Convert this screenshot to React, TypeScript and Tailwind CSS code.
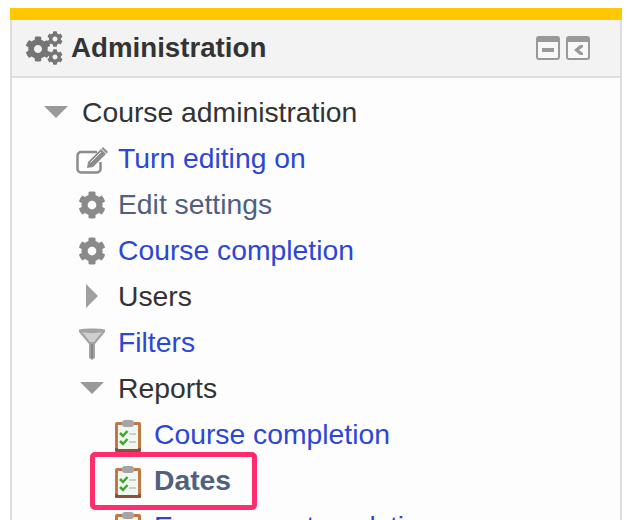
import { FaCog } from "react-icons/fa";

function TriangleDown() {
  return (
    <svg width="24" height="12" viewBox="0 0 24 12">
      <path d="M0 0H24L12 12Z" fill="#999" />
    </svg>
  );
}

function TriangleRight() {
  return (
    <svg width="12" height="24" viewBox="0 0 12 24">
      <path d="M0 0L12 12L0 24Z" fill="#a0a0a0" />
    </svg>
  );
}

function Gears() {
  return (
    <svg width="38" height="34" viewBox="0 0 38 34" className="shrink-0">
      <FaCog x="0" y="5" size={26} color="#757575" />
      <FaCog x="22" y="0" size={16} color="#757575" />
      <FaCog x="22" y="18" size={16} color="#757575" />
    </svg>
  );
}

function EditIcon() {
  return (
    <svg width="32" height="27" viewBox="0 0 32 27">
      <path d="M21 5H5a3.500 3.500 0 0 0-3.500 3.500V22A3.500 3.500 0 0 0 5 25.500H21a3.500 3.500 0 0 0 3.500-3.500V15" fill="none" stroke="#8c8c8c" strokeWidth="2.500" />
      <path d="M12 15L25 2L30 7L17 20L11 21Z" fill="#8c8c8c" />
      <path d="M27 0L32 5L30.500 6.500L25.500 1.500Z" fill="#8c8c8c" />
      <path d="M14.500 15.500L25 5" stroke="#f3f3f3" strokeWidth="1" />
    </svg>
  );
}

function Funnel() {
  return (
    <svg width="26" height="32" viewBox="0 0 26 32">
      <path d="M0 1.500C4 0 22 0 26 1.500V4L16 16V30L13 32L10 30V16L0 4Z" fill="#a3a3a3" />
      <path d="M3 4C8 5.500 18 5.500 23 4L15 14H11Z" fill="#cfcfcf" />
      <path d="M12 16H14V30H12Z" fill="#868686" />
    </svg>
  );
}

function Clipboard() {
  return (
    <svg width="26" height="32" viewBox="0 0 26 32">
      <rect x="0" y="2" width="26" height="30" rx="2" fill="#bd7a45" />
      <rect x="0" y="28" width="26" height="4" rx="1" fill="#8f4f3c" />
      <rect x="3" y="5" width="20" height="24" fill="#f1f6f1" />
      <rect x="7" y="0" width="12" height="7" rx="3" fill="#a5a5a5" />
      <path d="M5 13L8 16L12.500 11" fill="none" stroke="#3fa92f" strokeWidth="2.500" />
      <path d="M5 21L8 24L12.500 19" fill="none" stroke="#3fa92f" strokeWidth="2.500" />
      <path d="M14 14H21M14 22H21" stroke="#c9d0c9" strokeWidth="2" />
    </svg>
  );
}

function BlockIcon({ glyph }: { glyph: "minus" | "left" }) {
  return (
    <svg width="24" height="24" viewBox="0 0 24 24">
      <rect x="1" y="1" width="22" height="22" rx="2" fill="#f8f8f8" stroke="#999" strokeWidth="2" />
      <path d="M1 3a2 2 0 0 1 2-2h18a2 2 0 0 1 2 2v3H1Z" fill="#999" />
      {glyph === "minus" ? (
        <path d="M6 12H18V16H6Z" fill="#999" />
      ) : (
        <path d="M14 9L8 14L14 19H17V17L13 14L17 11V9Z" fill="#999" />
      )}
    </svg>
  );
}

const link = "text-[#2d46d6]";

function Row({ indent, icon, children }: { indent: string; icon: React.ReactNode; children: React.ReactNode }) {
  return (
    <div className={`flex h-[46px] items-center ${indent}`}>
      {icon}
      {children}
    </div>
  );
}

function IconSlot({ width, children }: { width: string; children: React.ReactNode }) {
  return <span className={`flex shrink-0 items-center justify-center ${width}`}>{children}</span>;
}

export default function App() {
  return (
    <div className="h-[520px] w-[630px] overflow-hidden bg-white pl-[10px] pt-2 font-['Liberation_Sans',Arial,sans-serif] text-[28.3px] text-[#333]">
      <div className="w-[612px] border-x-2 border-[#ddd] bg-[#fdfdfd]">
        <div className="-mx-[2px] h-3 bg-[#ffc800]" />
        <div className="flex h-[58px] items-center border-b-2 border-[#ddd] bg-[#f3f3f3] pl-[13px] pr-[30px]">
          <Gears />
          <h2 className="ml-[8px] text-[27.7px] font-bold text-[#333]">Administration</h2>
          <div className="ml-auto flex gap-[6px]">
            <BlockIcon glyph="minus" />
            <BlockIcon glyph="left" />
          </div>
        </div>
        <div className="pt-[11px]">
          <Row indent="pl-[32px]" icon={<IconSlot width="w-[24px] mr-[14px]"><TriangleDown /></IconSlot>}>
            <span>Course administration</span>
          </Row>
          <Row indent="pl-[64px]" icon={<IconSlot width="w-[32px] mr-[10px] mt-[4px]"><EditIcon /></IconSlot>}>
            <a className={link}>Turn editing on</a>
          </Row>
          <Row indent="pl-[64px]" icon={<IconSlot width="w-[32px] mr-[10px] mt-[2px]"><FaCog size={28} color="#8a8a8a" /></IconSlot>}>
            <a className="text-[#4f6080]">Edit settings</a>
          </Row>
          <Row indent="pl-[64px]" icon={<IconSlot width="w-[32px] mr-[10px] mt-[2px]"><FaCog size={28} color="#8a8a8a" /></IconSlot>}>
            <a className={link}>Course completion</a>
          </Row>
          <Row indent="pl-[64px]" icon={<IconSlot width="w-[32px] mr-[10px]"><TriangleRight /></IconSlot>}>
            <span>Users</span>
          </Row>
          <Row indent="pl-[64px]" icon={<IconSlot width="w-[32px] mr-[10px] mt-[3px]"><Funnel /></IconSlot>}>
            <a className={link}>Filters</a>
          </Row>
          <Row indent="pl-[64px]" icon={<IconSlot width="w-[32px] mr-[10px]"><TriangleDown /></IconSlot>}>
            <span>Reports</span>
          </Row>
          <Row indent="pl-[103px]" icon={<IconSlot width="w-[26px] mr-[13px] mt-[4px]"><Clipboard /></IconSlot>}>
            <a className={link}>Course completion</a>
          </Row>
          <div className="relative">
            <Row indent="pl-[103px]" icon={<IconSlot width="w-[26px] mr-[13px] mt-[4px]"><Clipboard /></IconSlot>}>
              <a className="font-bold text-[#4f6080]">Dates</a>
            </Row>
            <div className="absolute left-[78px] top-[-5px] h-[58px] w-[167px] rounded-[5px] border-[5px] border-[#ff2d6b]" />
          </div>
          <Row indent="pl-[103px]" icon={<IconSlot width="w-[26px] mr-[13px] mt-[4px]"><Clipboard /></IconSlot>}>
            <a className={link}>Engagement analytics</a>
          </Row>
        </div>
      </div>
    </div>
  );
}
